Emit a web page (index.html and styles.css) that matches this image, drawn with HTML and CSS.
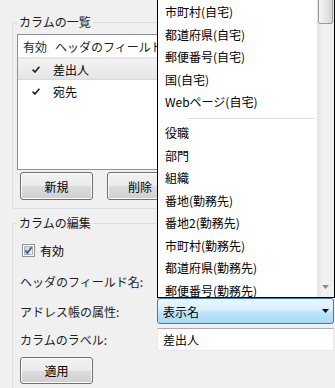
FILE: index.html
```html
<!DOCTYPE html>
<html>
<head>
  <title>カラムの設定</title>
  <link rel="stylesheet" href="styles.css">
</head>
<body>
  <div class="dialog">
    <div class="group">
      <span class="group-title">カラムの一覧</span>
      <div class="listview">
        <div class="lv-header">
          <span class="col-check">有効</span>
          <span class="col-name">ヘッダのフィールド名</span>
        </div>
        <div class="lv-row selected">
          <span class="col-check">
            <svg class="tick" width="8" height="7" viewBox="0 0 8 7"><path d="M0.6 3.6 L3 6 L7.4 0.8" fill="none" stroke="#1e1e1e" stroke-width="1.6"/></svg>
          </span>
          <span class="col-name">差出人</span>
        </div>
        <div class="lv-row">
          <span class="col-check">
            <svg class="tick" width="8" height="7" viewBox="0 0 8 7"><path d="M0.6 3.6 L3 6 L7.4 0.8" fill="none" stroke="#1e1e1e" stroke-width="1.6"/></svg>
          </span>
          <span class="col-name">宛先</span>
        </div>
      </div>
      <div class="buttons">
        <button class="btn">新規</button>
        <button class="btn btn-narrow">削除</button>
      </div>
    </div>

    <div class="group group-edit">
      <span class="group-title">カラムの編集</span>
      <label class="check-row">
        <svg width="13" height="13" viewBox="0 0 13 13">
          <defs>
            <linearGradient id="cbg" x1="0" y1="0" x2="1" y2="1">
              <stop offset="0" stop-color="#cbcfd5"/>
              <stop offset="1" stop-color="#f6f6f6"/>
            </linearGradient>
          </defs>
          <rect x="0.5" y="0.5" width="12" height="12" fill="#fff" stroke="#8e8f8f"/>
          <rect x="2.5" y="2.5" width="8" height="8" fill="url(#cbg)" stroke="#aeb3b9"/>
          <path d="M3.4 6.4 L5.4 9 L9.6 3.2" fill="none" stroke="#3b5b9b" stroke-width="1.8"/>
        </svg>
        有効
      </label>
      <div class="fields">
        <span class="field-label">ヘッダのフィールド名:</span>
        <input class="textbox" type="text" value="">
        <span class="field-label">アドレス帳の属性:</span>
        <div class="combo">
          <span>表示名</span>
          <svg width="7" height="4" viewBox="0 0 7 4"><path d="M0 0 H7 L3.5 4 Z" fill="#000"/></svg>
        </div>
        <span class="field-label">カラムのラベル:</span>
        <input class="textbox" type="text" value="差出人">
      </div>
      <button class="btn btn-apply">適用</button>
    </div>
  </div>

  <div class="dropdown">
    <div class="dd-items">
      <div class="dd-item">市町村(自宅)</div>
      <div class="dd-item">都道府県(自宅)</div>
      <div class="dd-item">郵便番号(自宅)</div>
      <div class="dd-item">国(自宅)</div>
      <div class="dd-item">Webページ(自宅)</div>
      <div class="dd-sep"></div>
      <div class="dd-item">役職</div>
      <div class="dd-item">部門</div>
      <div class="dd-item">組織</div>
      <div class="dd-item">番地(勤務先)</div>
      <div class="dd-item">番地2(勤務先)</div>
      <div class="dd-item">市町村(勤務先)</div>
      <div class="dd-item">都道府県(勤務先)</div>
      <div class="dd-item">郵便番号(勤務先)</div>
    </div>
    <div class="dd-scroll">
      <div class="dd-thumb"></div>
      <div class="dd-track"></div>
      <div class="dd-arrow">
        <svg width="7" height="4" viewBox="0 0 7 4"><path d="M0 0 H7 L3.5 4 Z" fill="#8a8a8a"/></svg>
      </div>
    </div>
  </div>
</body>
</html>
```

FILE: styles.css
```css
body {
  margin: 0;
  width: 335px;
  height: 388px;
  overflow: hidden;
  position: relative;
  background-color: #f0f0f0;
  font-family: "Noto Sans CJK JP", "Noto Sans", sans-serif;
  font-size: 12px;
  color: #000;
}

/* the window is cut off on the right and bottom */
.dialog {
  width: 335px;
  height: 388px;
  overflow: hidden;
  padding: 22px 0 0 12px;
  box-sizing: border-box;
}

/* group boxes */
.group {
  width: 340px;
  border: 1px solid #d5dfe5;
  border-radius: 3px;
  padding: 0 0 8px 4px;
  box-sizing: border-box;
}

.group-edit {
  margin-top: 14px;
  height: 200px;
}

.group-title {
  display: block;
  width: fit-content;
  margin-top: -9px;
  padding: 0 2px;
  line-height: 16px;
  background-color: #f0f0f0;
  color: #1a1a1a;
}

/* list view */
.listview {
  margin-top: 4px;
  width: 320px;
  height: 136px;
  border: 1px solid #8b9097;
  background-color: #fff;
  box-sizing: border-box;
}

.lv-header,
.lv-row {
  display: flex;
  align-items: center;
}

.lv-header {
  height: 23px;
  border-bottom: 1px solid #e5e5e5;
  box-sizing: border-box;
  color: #1e1e1e;
}

.lv-row {
  height: 22px;
  box-sizing: border-box;
}

.lv-row.selected {
  background: linear-gradient(#f3f3f3, #e5e5e5);
  border-top: 1px solid #e6e6e6;
  border-bottom: 1px solid #d9d9d9;
}

.col-check {
  width: 32px;
  padding-left: 5px;
  box-sizing: border-box;
}

.col-name {
  padding-left: 5px;
}

.lv-row .col-check {
  display: flex;
  padding-left: 14px;
}

.lv-row .col-name {
  padding-left: 3px;
}

/* buttons */
.buttons {
  display: flex;
  gap: 14px;
  margin: 2px 0 0 3px;
}

.btn {
  width: 73px;
  height: 28px;
  padding: 0;
  font: inherit;
  color: #000;
  border: 1px solid #707070;
  border-radius: 3px;
  background: linear-gradient(#f2f2f2, #ebebeb 50%, #dddddd 50%, #cfcfcf);
  box-shadow: inset 0 0 0 1px #fbfbfb;
}

.btn-narrow {
  width: 66px;
}

.btn-apply {
  display: block;
  height: 27px;
  margin: 6px 0 0 3px;
}

/* edit form */
.check-row {
  display: flex;
  align-items: center;
  gap: 5px;
  height: 25px;
  margin: 7px 0 0 5px;
}

.fields {
  display: grid;
  grid-template-columns: 137px 177px;
  grid-template-rows: 26px 26px 23px;
  row-gap: 4px;
  align-items: center;
  margin: 5px 0 0 3px;
}

.field-label {
  color: #1e1e1e;
}

.textbox {
  width: 177px;
  height: 23px;
  margin: 0;
  padding: 0 5px;
  box-sizing: border-box;
  font: inherit;
  color: #000;
  background-color: #fff;
  border: 1px solid #e3e9ef;
  border-top-color: #abadb3;
  outline: none;
}

.combo {
  display: flex;
  align-items: center;
  justify-content: space-between;
  width: 177px;
  height: 26px;
  padding: 0 4px 0 5px;
  box-sizing: border-box;
  border: 1px solid #3c7fb1;
  border-radius: 3px;
  background: linear-gradient(#eaf6fd, #d9f0fc 45%, #bee6fd 55%, #a7d9f5);
}

/* popup list */
.dropdown {
  position: absolute;
  left: 157px;
  top: 0;
  width: 178px;
  height: 298px;
  display: flex;
  overflow: hidden;
  box-sizing: border-box;
  background-color: #fff;
  border: 1px solid #000;
  border-top: 0;
}

.dd-items {
  flex: 1;
  padding-top: 1px;
}

.dd-item {
  height: 22.5px;
  line-height: 22.5px;
  padding-left: 7px;
  white-space: nowrap;
}

.dd-sep {
  height: 1px;
  margin: 4px 2px 3.5px 29px;
  background-color: #e0e0e0;
}

.dd-scroll {
  width: 17px;
  display: flex;
  flex-direction: column;
  background: linear-gradient(to right, #e3e3e3, #f2f2f2 35%, #eeeeee);
}

.dd-thumb {
  height: 34px;
  margin: -10px 1px 0 1px;
  border: 1px solid #9a9a9a;
  border-radius: 2px;
  box-sizing: border-box;
  background: linear-gradient(to right, #f5f5f5, #e6e6e6 50%, #d6d6d6);
}

.dd-track {
  flex: 1;
}

.dd-arrow {
  height: 17px;
  display: flex;
  justify-content: center;
  padding-top: 5px;
  box-sizing: border-box;
}
```
